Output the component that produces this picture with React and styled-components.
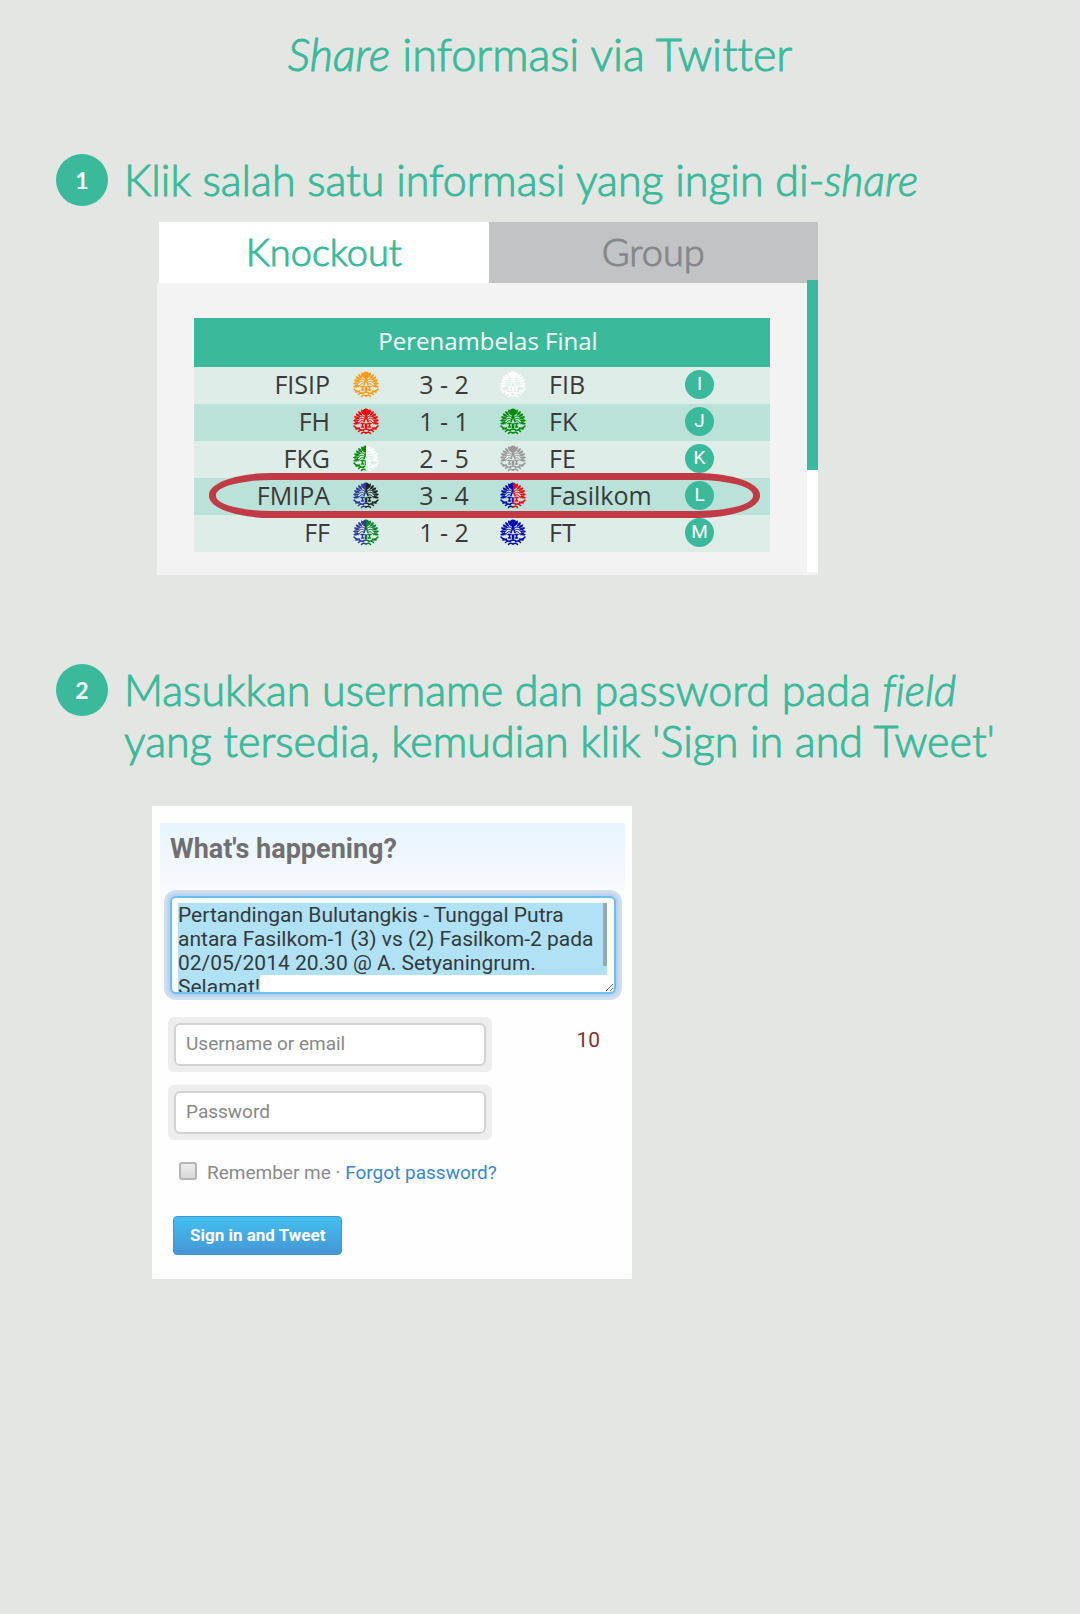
import React from "react";
import styled, { createGlobalStyle } from "styled-components";

const green = "#3aba9b";
const display = `Lato, "Open Sans", sans-serif`;
const body = `"Open Sans", "Noto Sans", sans-serif`;
const ui = `Roboto, "Liberation Sans", sans-serif`;

const GlobalStyle = createGlobalStyle`
  * { box-sizing: border-box; }
  body { margin: 0; background: #e4e6e3; font-family: ${body}; }
`;

const Page = styled.main`
  padding: 27px 40px 80px 56px;
  color: ${green};
  font-variant-ligatures: none;
`;

const Title = styled.h1`
  margin: 0 0 73px;
  padding-right: 16px;
  font-family: ${display};
  font-size: 45px;
  font-weight: 300;
  line-height: 54px;
  text-align: center;
  -webkit-text-stroke: 1px ${green};
`;

const Step = styled.section`
  display: grid;
  grid-template-columns: 52px minmax(0, 1fr);
  column-gap: 16px;
  align-items: start;
  margin-bottom: 89px;
`;

const StepNumber = styled.span`
  display: flex;
  align-items: center;
  justify-content: center;
  height: 52px;
  border-radius: 50%;
  background: ${green};
  color: #fff;
  font: 700 23px/24px ${display};
`;

const StepTitle = styled.h2`
  margin: 0;
  font-family: ${display};
  font-size: 43px;
  font-weight: 300;
  line-height: 51px;
  -webkit-text-stroke: 1px ${green};
`;

const Shot = styled.div`
  grid-column: 2;
  width: 100%;
  max-width: ${(p) => p.$width}px;
  margin: ${(p) => p.$top}px 0 0 ${(p) => p.$left}px;
`;

const Tabs = styled.div`
  display: flex;
  padding-left: 2px;
`;

const Tab = styled.button`
  flex: 1;
  height: 61px;
  padding: 0 0 4px;
  border: 0;
  background: ${(p) => (p.$active ? "#fff" : "#c2c3c5")};
  color: ${(p) => (p.$active ? green : "#868789")};
  font: 300 38px/48px ${display};
  -webkit-text-stroke: 1px currentColor;
`;

const Panel = styled.div`
  display: flex;
  background: #f3f3f3;
`;

const PanelBody = styled.div`
  flex: 1;
  padding: 35px 37px 23px 37px;
`;

const Track = styled.div`
  width: 11px;
  margin: -3px 0 3px;
  background: #fff;
`;

const Thumb = styled.div`
  height: 65%;
  background: ${green};
`;

const Table = styled.table`
  width: 100%;
  table-layout: fixed;
  border-collapse: collapse;
  color: #3a3a3a;
  font: 400 25px/33px ${body};
`;

const Caption = styled.caption`
  height: 49px;
  padding-left: 12px;
  background: ${green};
  color: #fff;
  font: 400 24px/45px ${body};
`;

const Col = styled.col`
  width: ${(p) => p.$w};
`;

const Row = styled.tr`
  position: relative;
  z-index: ${(p) => (p.$marked ? 1 : 0)};
  height: 37px;
  background: #deede7;
  &:nth-child(even) { background: #bae2d8; }
`;

const Cell = styled.td`
  padding: 0 0 3px ${(p) => p.$pad || 0}px;
  text-align: ${(p) => p.$align || "center"};
  vertical-align: middle;
`;

const Badge = styled.span`
  display: flex;
  align-items: center;
  justify-content: center;
  width: 29px;
  height: 29px;
  border-radius: 50%;
  background: ${green};
  color: #fff;
  font: 400 19px/20px ${ui};
`;

const Ring = styled.span`
  position: absolute;
  inset: -5px 10px -3px 15px;
  border: 7px solid #c03b45;
  border-radius: 62px / 22px;
`;

const Emblem = styled.svg`
  display: block;
  width: 28px;
  height: 27px;
  margin: 0 auto;
`;

const petals = [20, 36, 52, 68, 84, 100];

function Half({ color }) {
  return (
    <g fill="none" stroke={color} strokeWidth="2" strokeLinecap="round">
      <path d="M27 1C23 1 20 4 20 9c0 4 4 6 7 7z" fill={color} stroke="none" />
      {petals.map((a) => (
        <path key={a} d="M27 1C23 4 24 10 28 13C30 9 30 4 27 1z" fill={color} stroke="none" transform={`rotate(${-a} 27 27)`} />
      ))}
      <path d="M26 15c0 5-1 9-3 12" strokeWidth="3" />
      <path d="M25 19C22 15 17 15 13 19M24 23C18 18 12 21 9 29M23 27C19 23 15 26 12 32" strokeWidth="2" />
      <path d="M17 31h6M20 32v5M18 38h4M26 32v7" strokeWidth="3" />
      <path d="M3 36c3 4 6 6 11 4M7 42c4-1 6-1 9 1M12 47c3-3 6-4 10-2M18 51c2-3 5-3 9-1M27 42c-3 0-5 1-6 3" strokeWidth="3" />
    </g>
  );
}

function Makara({ left, right = left }) {
  return (
    <Emblem viewBox="0 0 54 54" aria-hidden="true">
      <Half color={left} />
      <g transform="matrix(-1 0 0 1 54 0)">
        <Half color={right} />
      </g>
    </Emblem>
  );
}

const matches = [
  { home: "FISIP", h: ["#ff9a0e"], score: "3 - 2", away: "FIB", a: ["#ffffff"], group: "I" },
  { home: "FH", h: ["#fb0007"], score: "1 - 1", away: "FK", a: ["#078a09"], group: "J" },
  { home: "FKG", h: ["#078a09", "#ffffff"], score: "2 - 5", away: "FE", a: ["#999999"], group: "K" },
  { home: "FMIPA", h: ["#303a9c", "#1f2422"], score: "3 - 4", away: "Fasilkom", a: ["#0509b4", "#fb0007"], group: "L", marked: true },
  { home: "FF", h: ["#303a9c", "#07832a"], score: "1 - 2", away: "FT", a: ["#0509b4"], group: "M" },
];

const Card = styled.form`
  padding: 17px 7px 24px 8px;
  background: #fefefe;
  font-family: ${ui};
  color: #8a8a8a;
`;

const Compose = styled.div`
  padding: 10px 9px 0 10px;
  background: linear-gradient(#e8f5fe, #f3f8fe 48px, #fefefe 90px);
`;

const ComposeLabel = styled.label`
  display: block;
  margin-bottom: 31px;
  color: #707070;
  font: 700 27px/32px ${ui};
`;

const TweetBox = styled.textarea`
  display: block;
  width: 100%;
  height: 98px;
  padding: 5px 6px 0;
  overflow: hidden;
  border: 2px solid #6cc0ee;
  border-radius: 6px;
  outline: 0;
  background:
    linear-gradient(#8fabb8, #8fabb8) 431px 5px / 4px 63px no-repeat padding-box,
    linear-gradient(#b0e1f5, #b0e1f5) 6px 5px / 429px 72px no-repeat padding-box,
    linear-gradient(#b0e1f5, #b0e1f5) 6px 77px / 82px 20px no-repeat padding-box,
    #fff;
  box-shadow: 0 0 4px 2px #a9cdef, 0 0 0 6px #d6e0ee;
  color: #333a3d;
  font: 400 21px/24px ${ui};
`;

const SignIn = styled.div`
  display: flex;
  justify-content: space-between;
  align-items: flex-start;
  padding: 23px 25px 0 8px;
`;

const Fields = styled.div`
  display: grid;
  gap: 13px;
  width: 324px;
`;

const Field = styled.div`
  padding: 6px;
  border-radius: 6px;
  background: #ededed;
`;

const Input = styled.input`
  display: block;
  width: 100%;
  height: 43px;
  padding: 0 10px 2px;
  border: 2px solid #d2d2d2;
  border-radius: 6px;
  background: #fff;
  font: 400 19px/24px ${ui};
  &::placeholder { color: #888; opacity: 1; }
`;

const Counter = styled.output`
  padding-top: 11px;
  color: #7f3234;
  font: 400 21px/24px ${ui};
`;

const Remember = styled.div`
  display: flex;
  align-items: center;
  padding: 21px 0 0 19px;
  font: 400 19px/24px ${ui};
  white-space: pre;
`;

const Check = styled.input`
  appearance: none;
  width: 18px;
  height: 18px;
  margin: 0 10px 4px 0;
  border: 2px solid #b5b5b5;
  border-radius: 3px;
  background: linear-gradient(#eee, #d8d8d8);
`;

const Link = styled.a`
  color: #3a86c8;
  text-decoration: none;
`;

const Submit = styled.button`
  display: block;
  height: 39px;
  margin: 31px 0 0 13px;
  padding: 0 16px 2px;
  border: 1px solid #3f97d0;
  border-radius: 4px;
  background: linear-gradient(#43bff0, #4696d5);
  color: #fff;
  font: 700 17px/24px ${ui};
`;

export default function App() {
  return (
    <>
      <GlobalStyle />
      <Page>
        <Title><em>Share</em> informasi via Twitter</Title>

        <Step>
          <StepNumber>1</StepNumber>
          <StepTitle>Klik salah satu informasi yang ingin di-<em>share</em></StepTitle>
          <Shot $width={661} $top={16} $left={33}>
            <Tabs>
              <Tab type="button" $active>Knockout</Tab>
              <Tab type="button">Group</Tab>
            </Tabs>
            <Panel>
              <PanelBody>
                <Table>
                  <Caption>Perenambelas Final</Caption>
                  <colgroup>
                    <Col $w="136px" />
                    <Col $w="71px" />
                    <Col $w="86px" />
                    <Col $w="51px" />
                    <Col $w="132px" />
                    <Col $w="auto" />
                  </colgroup>
                  <tbody>
                    {matches.map((m) => (
                      <Row key={m.group} $marked={m.marked}>
                        <Cell $align="right">{m.home}</Cell>
                        <Cell><Makara left={m.h[0]} right={m.h[1]} /></Cell>
                        <Cell>{m.score}</Cell>
                        <Cell><Makara left={m.a[0]} right={m.a[1]} /></Cell>
                        <Cell $align="left" $pad={11}>{m.away}</Cell>
                        <Cell $pad={15}>
                          <Badge>{m.group}</Badge>
                          {m.marked && <Ring />}
                        </Cell>
                      </Row>
                    ))}
                  </tbody>
                </Table>
              </PanelBody>
              <Track><Thumb /></Track>
            </Panel>
          </Shot>
        </Step>

        <Step>
          <StepNumber>2</StepNumber>
          <StepTitle>
            Masukkan username dan password pada <em>field</em><br />
            yang tersedia, kemudian klik 'Sign in and Tweet'
          </StepTitle>
          <Shot $width={480} $top={40} $left={28}>
            <Card onSubmit={(e) => e.preventDefault()}>
              <Compose>
                <ComposeLabel htmlFor="tweet">What's happening?</ComposeLabel>
                <TweetBox
                  id="tweet"
                  spellCheck={false}
                  defaultValue="Pertandingan Bulutangkis - Tunggal Putra antara Fasilkom-1 (3) vs (2) Fasilkom-2 pada 02/05/2014 20.30 @ A. Setyaningrum. Selamat!"
                />
              </Compose>
              <SignIn>
                <Fields>
                  <Field><Input type="text" placeholder="Username or email" aria-label="Username or email" /></Field>
                  <Field><Input type="password" placeholder="Password" aria-label="Password" /></Field>
                </Fields>
                <Counter>10</Counter>
              </SignIn>
              <Remember>
                <Check type="checkbox" id="remember" />
                <label htmlFor="remember">Remember me</label> · <Link href="#forgot">Forgot password?</Link>
              </Remember>
              <Submit type="submit">Sign in and Tweet</Submit>
            </Card>
          </Shot>
        </Step>
      </Page>
    </>
  );
}
